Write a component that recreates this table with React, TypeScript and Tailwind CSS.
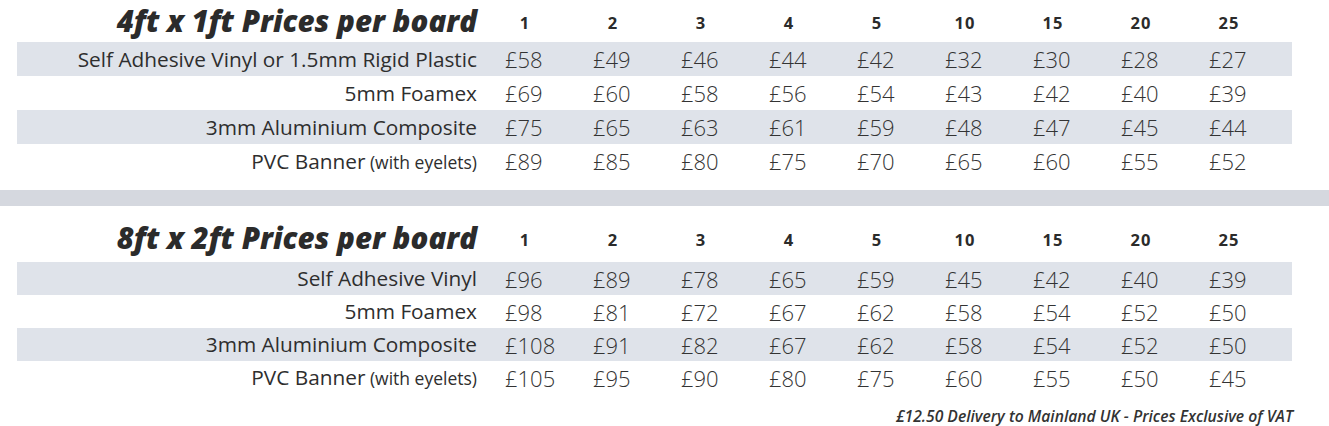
import React from 'react';

const quantities = ['1', '2', '3', '4', '5', '10', '15', '20', '25'];

interface PriceRow {
  label: string;
  note?: string;
  prices: number[];
}

const small: PriceRow[] = [
  { label: 'Self Adhesive Vinyl or 1.5mm Rigid Plastic', prices: [58, 49, 46, 44, 42, 32, 30, 28, 27] },
  { label: '5mm Foamex', prices: [69, 60, 58, 56, 54, 43, 42, 40, 39] },
  { label: '3mm Aluminium Composite', prices: [75, 65, 63, 61, 59, 48, 47, 45, 44] },
  { label: 'PVC Banner', note: '(with eyelets)', prices: [89, 85, 80, 75, 70, 65, 60, 55, 52] },
];

const large: PriceRow[] = [
  { label: 'Self Adhesive Vinyl', prices: [96, 89, 78, 65, 59, 45, 42, 40, 39] },
  { label: '5mm Foamex', prices: [98, 81, 72, 67, 62, 58, 54, 52, 50] },
  { label: '3mm Aluminium Composite', prices: [108, 91, 82, 67, 62, 58, 54, 52, 50] },
  { label: 'PVC Banner', note: '(with eyelets)', prices: [105, 95, 90, 80, 75, 60, 55, 50, 45] },
];

const gridCols = 'grid grid-cols-[464px_repeat(9,88px)_1fr] w-[1275px]';

function PriceTable({ title, rows, headerClass, rowClass }: { title: string; rows: PriceRow[]; headerClass: string; rowClass: string }) {
  return (
    <div className="pl-[17px]">
      {/* header: title + quantities */}
      <div className={`${gridCols} items-center ${headerClass}`}>
        <div className="pr-[4px] text-right text-[29.5px] font-extrabold italic leading-none text-[#2b2b2b]">
          {title}
        </div>
        {quantities.map(q => (
          <div key={q} className="text-center text-[16.5px] font-bold leading-none text-[#2b2b2b] tracking-[0.06em] mt-[4px]">
            {q}
          </div>
        ))}
        <div />
      </div>

      {rows.map((row, i) => (
        <div key={row.label} className={`${gridCols} items-center ${rowClass} ${i % 2 === 0 ? 'bg-[#dfe3ea]' : ''}`}>
          <div className="pr-[4px] text-right text-[20.8px] leading-none text-[#2e2e2e]">
            {row.label}
            {row.note && <span className="text-[17.5px]"> {row.note}</span>}
          </div>
          {row.prices.map((p, j) => (
            <div key={j} className="pl-[24px] text-[22px] font-light leading-none text-[#333]">
              £{p}
            </div>
          ))}
          <div />
        </div>
      ))}
    </div>
  );
}

export default function App() {
  return (
    <div className="w-[1329px] h-[426px] bg-white overflow-hidden" style={{ fontFamily: '"Open Sans", "Noto Sans", sans-serif' }}>
      <PriceTable title="4ft x 1ft Prices per board" rows={small} headerClass="h-[42px]" rowClass="h-[34px]" />

      <div className="mt-[12px] h-[16px] bg-[#d5d8df]" />

      <PriceTable title="8ft x 2ft Prices per board" rows={large} headerClass="h-[56px] pt-[8px]" rowClass="h-[33px]" />

      <div className="mt-[10px] pr-[36px] text-right text-[15.7px] font-semibold italic leading-[24px] text-[#333]">
        £12.50 Delivery to Mainland UK - Prices Exclusive of VAT
      </div>
    </div>
  );
}
